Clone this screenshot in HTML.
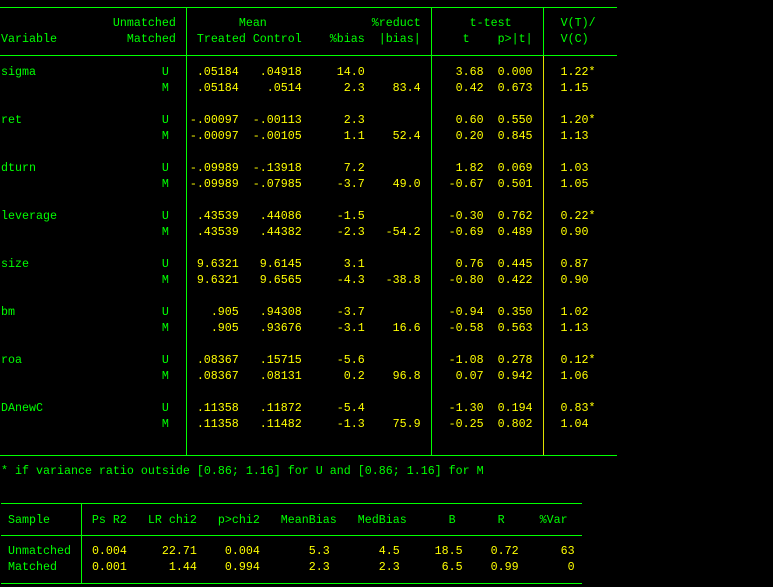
<!DOCTYPE html>
<html><head><meta charset="utf-8"><style>
html,body{margin:0;padding:0;background:#000;}
#w{position:relative;width:773px;height:587px;overflow:hidden;background:#000;font-family:"Liberation Mono",monospace;font-size:11.667px;line-height:16px;color:#00ff00;}
.r{position:absolute;left:1px;white-space:pre;height:16px;display:flex;}
.r span{display:inline-block;}
.a{width:23ch}.b{width:1ch}
.y{color:#ffff00}
.c1{width:10ch;text-align:right}.c2{width:9ch;text-align:right}.c3{width:9ch;text-align:right}.c4{width:8ch;text-align:right}.c5{width:9ch;text-align:right}.c6{width:7ch;text-align:right}.c7{padding-left:4ch}
.h{position:absolute;height:1px;background:#00ff00}
.v{position:absolute;width:1px;background:#00ff00}
.t{position:absolute;white-space:pre;}
</style></head><body><div id="w">
<div class="h" style="left:0;top:7px;width:617px"></div>
<div class="h" style="left:0;top:55px;width:617px"></div>
<div class="h" style="left:0;top:455px;width:617px"></div>
<div class="v" style="left:186px;top:7px;height:449px"></div>
<div class="v" style="left:431px;top:7px;height:449px"></div>
<div class="v" style="left:543px;top:7px;height:49px"></div>
<div class="v" style="left:543px;top:56px;height:399px;background:#e0e000"></div>

<div class="t" style="left:1px;top:15px">                Unmatched         Mean               %reduct       t-test       V(T)/</div>
<div class="t" style="left:1px;top:31px">Variable          Matched   Treated Control    %bias  |bias|      t    p&gt;|t|    V(C)</div>

<div class="r" style="top:64px"><span class="a">sigma</span><span class="b">U</span><span class="c1 y">.05184</span><span class="c2 y">.04918</span><span class="c3 y">14.0</span><span class="c4 y"></span><span class="c5 y">3.68</span><span class="c6 y">0.000</span><span class="c7 y">1.22*</span></div>
<div class="r" style="top:80px"><span class="a"></span><span class="b">M</span><span class="c1 y">.05184</span><span class="c2 y">.0514</span><span class="c3 y">2.3</span><span class="c4 y">83.4</span><span class="c5 y">0.42</span><span class="c6 y">0.673</span><span class="c7 y">1.15</span></div>
<div class="r" style="top:112px"><span class="a">ret</span><span class="b">U</span><span class="c1 y">-.00097</span><span class="c2 y">-.00113</span><span class="c3 y">2.3</span><span class="c4 y"></span><span class="c5 y">0.60</span><span class="c6 y">0.550</span><span class="c7 y">1.20*</span></div>
<div class="r" style="top:128px"><span class="a"></span><span class="b">M</span><span class="c1 y">-.00097</span><span class="c2 y">-.00105</span><span class="c3 y">1.1</span><span class="c4 y">52.4</span><span class="c5 y">0.20</span><span class="c6 y">0.845</span><span class="c7 y">1.13</span></div>
<div class="r" style="top:160px"><span class="a">dturn</span><span class="b">U</span><span class="c1 y">-.09989</span><span class="c2 y">-.13918</span><span class="c3 y">7.2</span><span class="c4 y"></span><span class="c5 y">1.82</span><span class="c6 y">0.069</span><span class="c7 y">1.03</span></div>
<div class="r" style="top:176px"><span class="a"></span><span class="b">M</span><span class="c1 y">-.09989</span><span class="c2 y">-.07985</span><span class="c3 y">-3.7</span><span class="c4 y">49.0</span><span class="c5 y">-0.67</span><span class="c6 y">0.501</span><span class="c7 y">1.05</span></div>
<div class="r" style="top:208px"><span class="a">leverage</span><span class="b">U</span><span class="c1 y">.43539</span><span class="c2 y">.44086</span><span class="c3 y">-1.5</span><span class="c4 y"></span><span class="c5 y">-0.30</span><span class="c6 y">0.762</span><span class="c7 y">0.22*</span></div>
<div class="r" style="top:224px"><span class="a"></span><span class="b">M</span><span class="c1 y">.43539</span><span class="c2 y">.44382</span><span class="c3 y">-2.3</span><span class="c4 y">-54.2</span><span class="c5 y">-0.69</span><span class="c6 y">0.489</span><span class="c7 y">0.90</span></div>
<div class="r" style="top:256px"><span class="a">size</span><span class="b">U</span><span class="c1 y">9.6321</span><span class="c2 y">9.6145</span><span class="c3 y">3.1</span><span class="c4 y"></span><span class="c5 y">0.76</span><span class="c6 y">0.445</span><span class="c7 y">0.87</span></div>
<div class="r" style="top:272px"><span class="a"></span><span class="b">M</span><span class="c1 y">9.6321</span><span class="c2 y">9.6565</span><span class="c3 y">-4.3</span><span class="c4 y">-38.8</span><span class="c5 y">-0.80</span><span class="c6 y">0.422</span><span class="c7 y">0.90</span></div>
<div class="r" style="top:304px"><span class="a">bm</span><span class="b">U</span><span class="c1 y">.905</span><span class="c2 y">.94308</span><span class="c3 y">-3.7</span><span class="c4 y"></span><span class="c5 y">-0.94</span><span class="c6 y">0.350</span><span class="c7 y">1.02</span></div>
<div class="r" style="top:320px"><span class="a"></span><span class="b">M</span><span class="c1 y">.905</span><span class="c2 y">.93676</span><span class="c3 y">-3.1</span><span class="c4 y">16.6</span><span class="c5 y">-0.58</span><span class="c6 y">0.563</span><span class="c7 y">1.13</span></div>
<div class="r" style="top:352px"><span class="a">roa</span><span class="b">U</span><span class="c1 y">.08367</span><span class="c2 y">.15715</span><span class="c3 y">-5.6</span><span class="c4 y"></span><span class="c5 y">-1.08</span><span class="c6 y">0.278</span><span class="c7 y">0.12*</span></div>
<div class="r" style="top:368px"><span class="a"></span><span class="b">M</span><span class="c1 y">.08367</span><span class="c2 y">.08131</span><span class="c3 y">0.2</span><span class="c4 y">96.8</span><span class="c5 y">0.07</span><span class="c6 y">0.942</span><span class="c7 y">1.06</span></div>
<div class="r" style="top:400px"><span class="a">DAnewC</span><span class="b">U</span><span class="c1 y">.11358</span><span class="c2 y">.11872</span><span class="c3 y">-5.4</span><span class="c4 y"></span><span class="c5 y">-1.30</span><span class="c6 y">0.194</span><span class="c7 y">0.83*</span></div>
<div class="r" style="top:416px"><span class="a"></span><span class="b">M</span><span class="c1 y">.11358</span><span class="c2 y">.11482</span><span class="c3 y">-1.3</span><span class="c4 y">75.9</span><span class="c5 y">-0.25</span><span class="c6 y">0.802</span><span class="c7 y">1.04</span></div>

<div class="t" style="left:1px;top:463px">* if variance ratio outside [0.86; 1.16] for U and [0.86; 1.16] for M</div>

<div class="h" style="left:1px;top:503px;width:581px"></div>
<div class="h" style="left:1px;top:535px;width:581px"></div>
<div class="h" style="left:1px;top:583px;width:581px"></div>
<div class="v" style="left:81px;top:503px;height:80px"></div>
<div class="t" style="left:1px;top:512px"> Sample      Ps R2   LR chi2   p&gt;chi2   MeanBias   MedBias      B      R     %Var</div>
<div class="t" style="left:1px;top:543px"> Unmatched   <span class="y">0.004     22.71    0.004       5.3       4.5     18.5    0.72      63</span></div>
<div class="t" style="left:1px;top:559px"> Matched     <span class="y">0.001      1.44    0.994       2.3       2.3      6.5    0.99       0</span></div>
</div></body></html>
